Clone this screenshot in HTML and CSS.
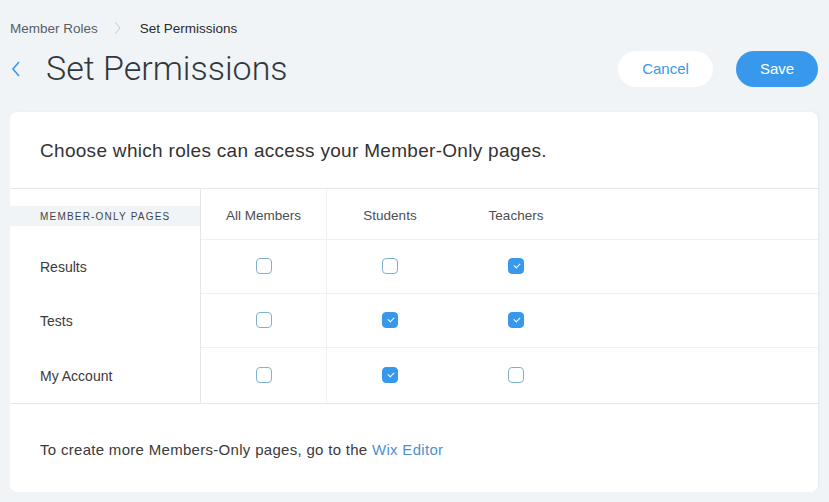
FILE: index.html
```html
<!DOCTYPE html>
<html>
<head>
<meta charset="utf-8">
<link rel="stylesheet" href="styles.css">
</head>
<body>
<div class="page">
  <nav class="crumbs">
    <span class="crumb">Member Roles</span>
    <svg class="crumb-sep" width="8" height="14" viewBox="0 0 8 14"><path d="M1 1 L6 7 L1 13" fill="none" stroke="#c5ccd2" stroke-width="1"/></svg>
    <span class="crumb current">Set Permissions</span>
  </nav>
  <header class="head">
    <svg class="back" width="12" height="18" viewBox="0 0 12 18"><path d="M9 2 L3 9 L9 16" fill="none" stroke="#3899ec" stroke-width="1.6"/></svg>
    <h1 class="title">Set Permissions</h1>
    <div class="actions">
      <button class="btn cancel">Cancel</button>
      <button class="btn save">Save</button>
    </div>
  </header>
  <section class="card">
    <p class="intro">Choose which roles can access your Member-Only pages.</p>
    <div class="table">
      <div class="cell side head-side"><span class="label">MEMBER-ONLY PAGES</span></div>
      <div class="cell colhead sep">All Members</div>
      <div class="cell colhead">Students</div>
      <div class="cell colhead">Teachers</div>
      <div class="cell colhead fill"></div>

      <div class="cell side">Results</div>
      <div class="cell box sep"><span class="cb"></span></div>
      <div class="cell box"><span class="cb"></span></div>
      <div class="cell box"><span class="cb on"></span></div>
      <div class="cell box fill"></div>

      <div class="cell side">Tests</div>
      <div class="cell box sep"><span class="cb"></span></div>
      <div class="cell box"><span class="cb on"></span></div>
      <div class="cell box"><span class="cb on"></span></div>
      <div class="cell box fill"></div>

      <div class="cell side last">My Account</div>
      <div class="cell box sep last"><span class="cb"></span></div>
      <div class="cell box last"><span class="cb on"></span></div>
      <div class="cell box last"><span class="cb"></span></div>
      <div class="cell box fill last"></div>
    </div>
    <p class="foot">To create more Members-Only pages, go to the <a class="link" href="#">Wix Editor</a></p>
  </section>
</div>
</body>
</html>
```
FILE: styles.css
```css
html, body {
  margin: 0;
  padding: 0;
  background: #f0f4f7;
  font-family: "Liberation Sans", Arial, sans-serif;
  color: #333;
}
.page {
  padding: 0 11px 0 10px;
  width: 808px;
}
.crumbs {
  display: flex;
  align-items: center;
  height: 56px;
  font-size: 13.5px;
}
.crumb { color: #555f66; }
.crumb.current { color: #2b2b2b; }
.crumb-sep { margin: 0 18px 0 16px; }
.head {
  display: flex;
  align-items: center;
  height: 25px;
}
.back { flex: none; }
.title {
  margin: 0 0 0 24px;
  font-weight: 300;
  font-family: Roboto, "Liberation Sans", Arial, sans-serif;
  font-size: 34px;
  color: #32373c;
  line-height: 25px;
  flex: 1;
}
.actions {
  display: flex;
  gap: 23px;
}
.btn {
  height: 36px;
  border: none;
  border-radius: 18px;
  font-family: "Liberation Sans", Arial, sans-serif;
  font-size: 15px;
  cursor: pointer;
}
.cancel {
  width: 95px;
  background: #fff;
  color: #3899ec;
}
.save {
  width: 82px;
  background: #3899ec;
  color: #fff;
}
.card {
  margin-top: 31px;
  background: #fff;
  border-radius: 7px;
  box-shadow: 1px 0 2px rgba(22, 45, 61, 0.06);
}
.intro {
  margin: 0;
  height: 77px;
  box-sizing: border-box;
  padding: 28px 0 0 30px;
  font-size: 19px;
  letter-spacing: 0.3px;
  color: #333;
  border-bottom: 1px solid #e3e7ea;
}
.table {
  display: grid;
  grid-template-columns: 191px 126px 126px 126px 1fr;
  grid-template-rows: 51px 54px 54px 55px;
  border-bottom: 1px solid #e3e7ea;
}
.cell {
  display: flex;
  align-items: center;
  box-sizing: border-box;
  border-bottom: 1px solid #eef1f3;
}
.cell.last { border-bottom: none; }
.side {
  padding-left: 30px;
  border-right: 1px solid #e3e7ea;
  border-bottom: none;
  font-size: 14px;
  color: #3a3a3a;
}
.head-side {
  padding-left: 0;
}
.label {
  display: flex;
  align-items: center;
  width: 100%;
  height: 20px;
  margin-top: 3px;
  padding-left: 30px;
  background: #f0f4f7;
  font-size: 10px;
  letter-spacing: 1.2px;
  color: #3f4449;
}
.colhead {
  justify-content: center;
  font-size: 13.5px;
  color: #4a4f54;
  padding-top: 2px;
}
.sep { border-right: 1px solid #eef1f3; }
.box { justify-content: center; }
.cb {
  width: 16px;
  height: 16px;
  box-sizing: border-box;
  border: 1px solid #7fb2cc;
  border-radius: 4px;
  background: #fff;
  position: relative;
  margin-top: -1px;
}
.cb.on {
  background: #3899ec;
  border-color: #3899ec;
}
.cb.on::after {
  content: "";
  position: absolute;
  left: 4.5px;
  top: 3.5px;
  width: 5px;
  height: 3px;
  border-left: 1.5px solid #fff;
  border-bottom: 1.5px solid #fff;
  transform: rotate(-45deg);
}
.foot {
  margin: 0;
  height: 88px;
  box-sizing: border-box;
  padding: 37px 0 0 30px;
  font-size: 15px;
  letter-spacing: 0.3px;
  color: #3a3a3a;
}
.link {
  color: #4f8fd0;
  text-decoration: none;
}
```
